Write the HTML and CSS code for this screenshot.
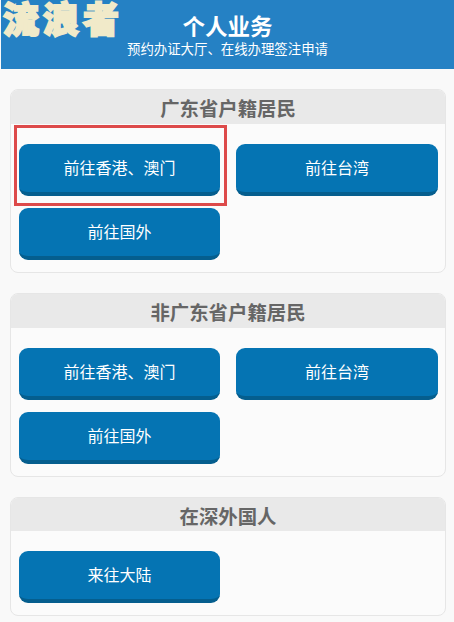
FILE: index.html
```html
<!DOCTYPE html>
<html lang="zh-CN">
<head>
    <meta charset="UTF-8">
    <meta name="viewport" content="width=device-width, initial-scale=1.0">
    <title>个人业务</title>
    <link rel="stylesheet" href="styles.css">
</head>
<body>
    <header class="top-bar">
        <h1>个人业务</h1>
        <p>预约办证大厅、在线办理签注申请</p>
    </header>
    <div class="watermark">流浪者</div>

    <main class="content">
        <section class="card">
            <h2>广东省户籍居民</h2>
            <div class="btn-grid">
                <a class="btn">前往香港、澳门</a>
                <a class="btn">前往台湾</a>
                <a class="btn">前往国外</a>
            </div>
        </section>

        <section class="card">
            <h2>非广东省户籍居民</h2>
            <div class="btn-grid">
                <a class="btn">前往香港、澳门</a>
                <a class="btn">前往台湾</a>
                <a class="btn">前往国外</a>
            </div>
        </section>

        <section class="card card-short">
            <h2>在深外国人</h2>
            <div class="btn-grid">
                <a class="btn">来往大陆</a>
            </div>
        </section>
    </main>

    <div class="highlight"></div>
</body>
</html>
```

FILE: styles.css
```css
html, body { margin: 0; padding: 0; }
body { position: relative; height: 622px; overflow: hidden; background: #f9f9f9; font-family: "Noto Sans CJK SC", "Liberation Sans", sans-serif; }
.top-bar { height: 69px; margin-left: 1px; background: #2581c4; color: #fff; text-align: center; box-sizing: border-box; padding-top: 13px; }
.top-bar h1 { margin: 0; font-size: 22.5px; line-height: 24px; font-weight: 700; }
.top-bar p { margin: 3px 0 0; font-size: 13.4px; line-height: 17px; }
.watermark { position: absolute; left: 3px; top: -1px; font-size: 36px; line-height: 37px; font-weight: 900; color: #f1eac9; -webkit-text-stroke: 2px #f1eac9; letter-spacing: 4px; }
.content { padding: 20px 8px 0 10px; display: flex; flex-direction: column; gap: 20px; }
.card { border: 1px solid #e6e6e6; border-radius: 8px; background: #fbfbfb; overflow: hidden; }
.card h2 { margin: 0; height: 34px; line-height: 36px; background: #e9e9e9; color: #666; font-size: 19.4px; font-weight: 700; text-align: center; }
.card-short h2 { height: 33px; }
.btn-grid { display: grid; grid-template-columns: 201px 202px; column-gap: 16px; row-gap: 12px; padding: 20px 7px 12px 8px; }
.btn { display: block; height: 48px; line-height: 46px; border-radius: 9px; background: #0574b3; border-bottom: 4px solid #055e8e; color: #fff; font-size: 16px; text-align: center; }
.highlight { position: absolute; left: 14px; top: 125px; width: 207px; height: 75px; border: 3px solid #dd4a4a; }
```
